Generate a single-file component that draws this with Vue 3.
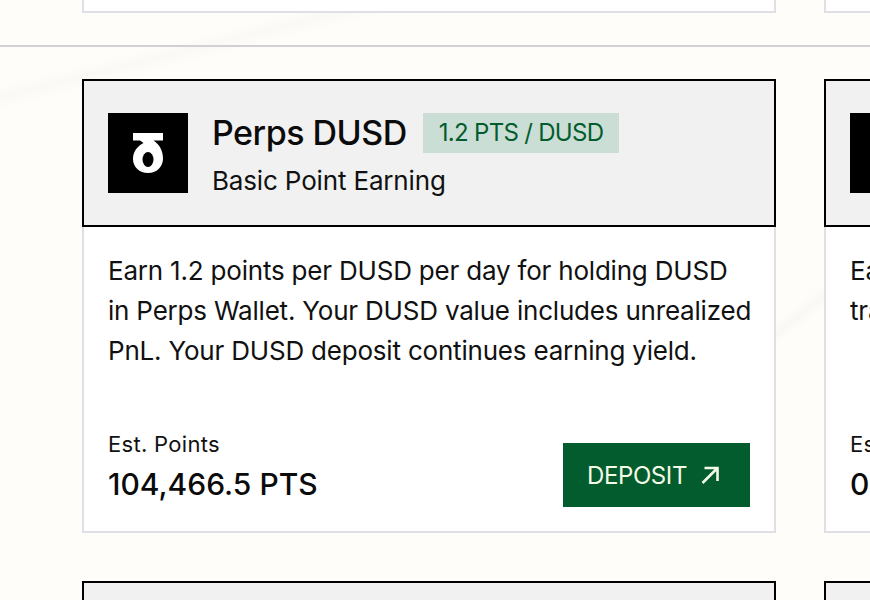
<script setup>
const topRow = [0, 1]

const cards = [
  {
    title: 'Perps DUSD',
    tag: '1.2 PTS / DUSD',
    subtitle: 'Basic Point Earning',
    text: 'Earn 1.2 points per DUSD per day for holding DUSD in Perps Wallet. Your DUSD value includes unrealized PnL. Your DUSD deposit continues earning yield.',
    points: '104,466.5 PTS',
    action: 'DEPOSIT'
  },
  {
    title: 'Perps Volume',
    tag: '1 PT / $1',
    subtitle: 'Basic Point Earning',
    text: 'Earn 0.02 points per 1 DUSD of volume for all your trades on Perps markets each day.',
    points: '0 PTS',
    action: 'TRADE'
  }
]

const nextRow = ['Spot DUSD', 'Spot Volume']
</script>

<template>
  <div class="page">
    <div class="row row-stub">
      <div v-for="i in topRow" :key="i" class="stub"></div>
    </div>

    <hr class="divider" />

    <div class="row">
      <section v-for="card in cards" :key="card.title" class="card">
        <header class="card-head">
          <div class="logo">
            <svg width="30" height="40" viewBox="0 0 30 40">
              <path d="M0 0H30V7.5H20.5C26 11 30 17.5 30 25.5C30 34 23.5 40 15 40C6.5 40 0 34 0 26C0 18.5 4.5 13 10.5 10L7 7.5H0Z" fill="#fff" />
              <ellipse cx="15" cy="26.5" rx="5.5" ry="7.5" fill="#000" />
            </svg>
          </div>
          <div class="head-text">
            <div class="title-line">
              <h2 class="title">{{ card.title }}</h2>
              <span class="tag">{{ card.tag }}</span>
            </div>
            <p class="subtitle">{{ card.subtitle }}</p>
          </div>
        </header>
        <div class="card-body">
          <p class="desc">{{ card.text }}</p>
          <div class="card-foot">
            <div>
              <div class="est-label">Est. Points</div>
              <div class="est-value">{{ card.points }}</div>
            </div>
            <button class="action">
              {{ card.action }}
              <svg width="20" height="20" viewBox="0 0 20 20" fill="none" stroke="#f4fbe6" stroke-width="2.6">
                <path d="M2.5 18L17 3.5M4.5 3H17.5V16" />
              </svg>
            </button>
          </div>
        </div>
      </section>
    </div>

    <div class="row row-next">
      <section v-for="name in nextRow" :key="name" class="card-next"></section>
    </div>
  </div>
</template>

<style scoped>
.page {
  height: 600px;
  overflow: hidden;
  font-family: Inter, "Liberation Sans", sans-serif;
  font-variation-settings: "opsz" 32;
  color: #0b0b0b;
  background-color: #fffdf9;
  background-image:
    linear-gradient(166deg, transparent calc(50% - 313px), #faf9f5 calc(50% - 303px), transparent calc(50% - 289px)),
    linear-gradient(142deg, transparent calc(50% + 329px), #f9f8f4 calc(50% + 339px), transparent calc(50% + 349px));
  background-repeat: no-repeat;
  background-size: 870px 600px, 870px 340px;
}

.row {
  display: grid;
  grid-template-columns: 694px 694px;
  gap: 48px;
  padding-left: 82px;
}

.row-stub {
  height: 13px;
}

.stub {
  background: #fff;
  border: 2px solid #e0e0e4;
  border-top: 0;
}

.divider {
  height: 2px;
  margin: 32px 0;
  border: 0;
  background: #d0d0d6;
}

.card {
  display: flex;
  flex-direction: column;
  height: 454px;
}

.card-head {
  display: flex;
  gap: 24px;
  height: 148px;
  box-sizing: border-box;
  padding: 32px 24px;
  background: #f1f1f2;
  border: 2px solid #000;
}

.logo {
  display: flex;
  align-items: center;
  justify-content: center;
  flex: none;
  width: 80px;
  height: 80px;
  background: #000;
}

.head-text {
  display: flex;
  flex-direction: column;
  justify-content: space-between;
  white-space: nowrap;
}

.title-line {
  display: flex;
  align-items: center;
  gap: 16px;
  height: 40px;
}

.title {
  margin: 0;
  font-size: 34px;
  font-weight: 500;
  line-height: 42px;
  letter-spacing: -0.5px;
}

.tag {
  padding: 0 16px;
  font-size: 24px;
  line-height: 40px;
  letter-spacing: -0.7px;
  color: #025c2e;
  background: #cbded5;
}

.subtitle {
  margin: 0;
  font-size: 26px;
  line-height: 24px;
  letter-spacing: -0.16px;
  color: #111;
}

.card-body {
  display: flex;
  flex: 1;
  flex-direction: column;
  justify-content: space-between;
  padding: 24px;
  background: #fff;
  border: 2px solid #e0e0e4;
  border-top: 0;
}

.desc {
  margin: 0 -4px 0 0;
  font-size: 26px;
  line-height: 40px;
  letter-spacing: -0.2px;
  color: #111;
}

.card-foot {
  display: flex;
  align-items: flex-end;
  justify-content: space-between;
}

.est-label {
  font-size: 22px;
  line-height: 34px;
  letter-spacing: 0.3px;
  color: #111;
}

.est-value {
  font-size: 30px;
  font-weight: 450;
  line-height: 46px;
}

.action {
  display: flex;
  align-items: center;
  gap: 13px;
  height: 64px;
  padding: 0 30px 0 24px;
  border: 0;
  font-family: inherit;
  font-size: 24px;
  letter-spacing: -0.4px;
  color: #f4fbe6;
  background: #025c2e;
}

.row-next {
  height: 19px;
  margin-top: 48px;
}

.card-next {
  height: 40px;
  box-sizing: border-box;
  background: #f1f1f2;
  border: 2px solid #000;
}
</style>
